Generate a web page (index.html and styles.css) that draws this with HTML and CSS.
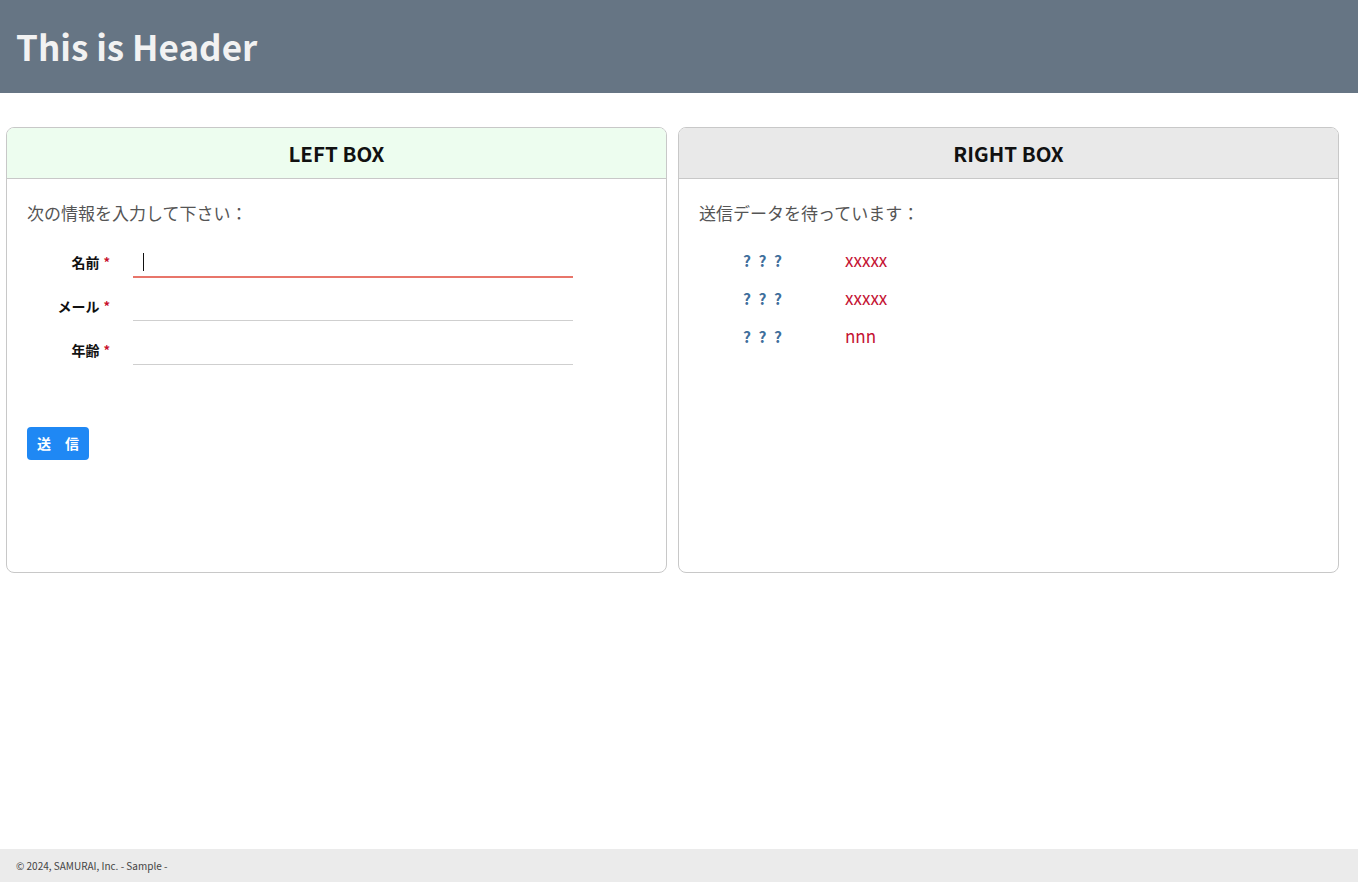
FILE: index.html
```html
<!DOCTYPE html>
<html lang="ja">
<head>
<meta charset="utf-8">
<title>Sample</title>
<link rel="stylesheet" href="styles.css">
</head>
<body>
<div class="page">
  <header class="site-header">
    <h1 class="site-title">This is Header</h1>
  </header>
  <main class="main">
    <section class="box">
      <div class="box-head box-head-left">LEFT BOX</div>
      <div class="box-body">
        <p class="lead">次の情報を入力して下さい：</p>
        <form class="form">
          <label class="form-label">名前<span class="req">*</span></label>
          <div class="field">
            <input class="input input-focus" type="text">
            <span class="caret"></span>
          </div>
          <label class="form-label">メール<span class="req">*</span></label>
          <div class="field"><input class="input" type="text"></div>
          <label class="form-label">年齢<span class="req">*</span></label>
          <div class="field"><input class="input" type="text"></div>
        </form>
        <button class="btn" type="button">送　信</button>
      </div>
    </section>
    <section class="box">
      <div class="box-head box-head-right">RIGHT BOX</div>
      <div class="box-body">
        <p class="lead">送信データを待っています：</p>
        <div class="result">
          <div class="result-key">? ? ?</div><div class="result-val">xxxxx</div>
          <div class="result-key">? ? ?</div><div class="result-val">xxxxx</div>
          <div class="result-key">? ? ?</div><div class="result-val">nnn</div>
        </div>
      </div>
    </section>
  </main>
  <footer class="site-footer">© 2024, SAMURAI, Inc. - Sample -</footer>
</div>
</body>
</html>
```

FILE: styles.css
```css
* { box-sizing: border-box; }
html, body { margin: 0; padding: 0; }
body {
  font-family: "Noto Sans CJK JP", "Noto Sans", sans-serif;
  color: #222;
  background: #fff;
}
.page {
  min-height: 100vh;
  display: flex;
  flex-direction: column;
}
.site-header {
  height: 93px;
  background: #667584;
  display: flex;
  align-items: center;
  padding: 0 16px 3px;
}
.site-title {
  margin: 0;
  font-size: 35px;
  font-weight: 700;
  color: #f2f2f2;
  line-height: 1;
}
.main {
  flex: 1;
  display: flex;
  gap: 11px;
  padding: 34px 19px 0 6px;
  align-items: flex-start;
}
.box {
  flex: 1;
  height: 446px;
  border: 1px solid #c8c8c8;
  border-radius: 8px;
  overflow: hidden;
}
.box-head {
  height: 51px;
  border-bottom: 1px solid #c8c8c8;
  display: flex;
  align-items: center;
  justify-content: center;
  font-size: 20.5px;
  font-weight: 700;
  color: #111;
}
.box-head-left { background: #edfdef; }
.box-head-right { background: #e9e9e9; }
.box-body {
  padding: 20px 20px;
}
.lead {
  margin: 0;
  font-size: 17px;
  line-height: 27px;
  color: #555;
}
.form {
  margin-top: 21px;
  display: grid;
  grid-template-columns: 83px 440px;
  column-gap: 23px;
  row-gap: 14px;
  align-items: end;
}
.form-label {
  font-size: 14px;
  font-weight: 700;
  color: #111;
  text-align: right;
  line-height: 20px;
  padding-bottom: 5px;
}
.req {
  color: #c8102e;
  margin-left: 4px;
  font-size: 13px;
  vertical-align: 1px;
}
.field { position: relative; }
.input {
  display: block;
  width: 100%;
  height: 30px;
  border: none;
  border-bottom: 1px solid #cfcfcf;
  outline: none;
  background: transparent;
  font-family: inherit;
  font-size: 15px;
  padding: 0 10px;
}
.input-focus {
  border-bottom: 1px solid #e8756a;
  box-shadow: 0 1px 0 #e8756a;
}
.caret {
  position: absolute;
  left: 10px;
  top: 6px;
  width: 1px;
  height: 18px;
  background: #111;
}
.btn {
  margin-top: 62px;
  display: block;
  width: 62px;
  height: 33px;
  border: none;
  border-radius: 4px;
  background: #1f88f4;
  color: #fff;
  font-family: inherit;
  font-size: 14px;
  font-weight: 700;
  padding: 0 0 2px;
}
.result {
  margin-top: 20px;
  display: grid;
  grid-template-columns: 102px 1fr;
  row-gap: 10px;
  padding-left: 44px;
}
.result-key {
  font-size: 15.5px;
  font-weight: 700;
  color: #3f6f9c;
  line-height: 28px;
  letter-spacing: 2px;
}
.result-val {
  font-size: 17px;
  color: #c41232;
  line-height: 28px;
}
.site-footer {
  height: 33px;
  background: #ebebeb;
  padding: 0 16px;
  display: flex;
  align-items: center;
  font-size: 10px;
  color: #444;
}
```
